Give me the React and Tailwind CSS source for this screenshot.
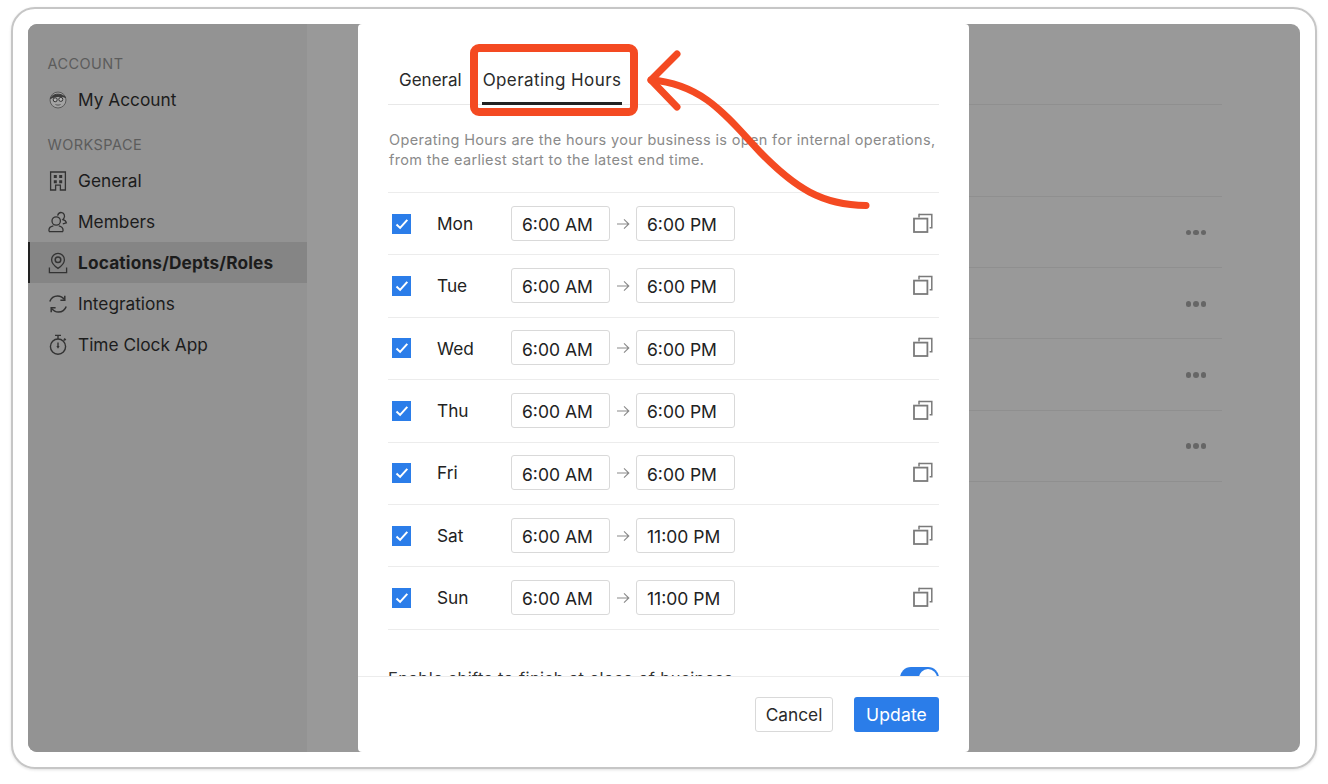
const days = [
  { day: "Mon", end: "6:00 PM" },
  { day: "Tue", end: "6:00 PM" },
  { day: "Wed", end: "6:00 PM" },
  { day: "Thu", end: "6:00 PM" },
  { day: "Fri", end: "6:00 PM" },
  { day: "Sat", end: "11:00 PM" },
  { day: "Sun", end: "11:00 PM" },
]

const AvatarIcon = () => (
  <svg width="20" height="20" viewBox="0 0 20 20" fill="none" stroke="#333" strokeWidth="1">
    <circle cx="10" cy="10" r="8" fill="#a3a3a3" stroke="#5a5a5a" />
    <path d="M2.400 8.600C4 4 12 2 17.600 7.400C13 5.800 7 6 2.400 8.600z" fill="#3a3a3a" stroke="#3a3a3a" />
    <circle cx="7.200" cy="9.800" r="2" fill="#b5b5b5" />
    <circle cx="12.800" cy="9.400" r="2" fill="#b5b5b5" />
    <path d="M7.500 14.500c1.600.8 3.400.8 5 0" stroke="#555" />
  </svg>
)

const BuildingIcon = () => (
  <svg width="20" height="20" viewBox="0 0 20 20" fill="none" stroke="#333" strokeWidth="1.300">
    <path d="M2.600 1h14.800v18h-5v-4.800H7.600V19h-5z" />
    <path d="M5.800 4h3v3h-3zM11.200 4h3v3h-3zM5.800 9.200h3v3h-3zM11.200 9.200h3v3h-3z" fill="#333" stroke="none" />
  </svg>
)

const MembersIcon = () => (
  <svg width="20" height="22" viewBox="0 0 20 22" fill="none" stroke="#333" strokeWidth="1.300">
    <circle cx="8.200" cy="10" r="4.200" />
    <path d="M1 20.600v-1.800c0-2.400 2.200-3.600 4.400-4M15 20.600v-1.800c0-2.400-2.200-3.600-4.200-4M1 20.600h14" />
    <path d="M9.600 4.600C10.200 2.400 12 1.200 13.800 1.600c2.400.5 3.400 3.400 2.200 5.400-.4.8-.8 1.200-1.200 1.600 1.600.4 3.200 1.400 3.600 3.200l-3.600 1" />
  </svg>
)

const LocationIcon = () => (
  <svg width="20" height="22" viewBox="0 0 20 22" fill="none" stroke="#333" strokeWidth="1.300">
    <path d="M10 16.400C6.600 14.200 3.600 11.600 3.600 7.800a6.400 6.400 0 0 1 12.800 0c0 3.800-3 6.400-6.400 8.600z" />
    <circle cx="10" cy="7.800" r="2.800" strokeWidth="1.500" />
    <path d="M1.400 15.600v5h17.200v-5" />
  </svg>
)

const SyncIcon = () => (
  <svg width="20" height="20" viewBox="0 0 20 20" fill="none" stroke="#333" strokeWidth="1.500">
    <path d="M1.800 7.600C3 4.200 6 2 9.600 2c2.800 0 5 1.200 6.600 3.400" />
    <path d="M16.800 1.800v4.400h-4.400" />
    <path d="M18.200 12.400c-1.200 3.400-4.200 5.600-7.800 5.600-2.800 0-5-1.200-6.600-3.400" />
    <path d="M3.200 18.200v-4.400h4.400" />
  </svg>
)

const TimerIcon = () => (
  <svg width="20" height="22" viewBox="0 0 20 22" fill="none" stroke="#333" strokeWidth="1.400">
    <circle cx="10" cy="12.600" r="7.600" />
    <path d="M7 1.400h6M10 1.400V5M16.200 4.400l1.600 1.600M15.600 6.600l1.400-1.400" />
    <path d="M10 8.600v4.600" />
    <path d="M8.400 12h3.200L10 14.800z" fill="#333" stroke="none" />
  </svg>
)

const CopyIcon = () => (
  <svg width="20" height="20" viewBox="0 0 20 20" fill="none" stroke="#7a7a7a">
    <rect x="1" y="5.600" width="13.400" height="13.400" strokeWidth="1.800" />
    <path d="M6 1.400h12.800v13.400h-2.200" strokeWidth="1.500" />
    <path d="M6 .800v3.600" strokeWidth="1.500" />
  </svg>
)

function SideItem({ icon, label, active }) {
  return (
    <div
      className={`flex h-[41px] items-center text-[17.300px] text-[#1c1c1c] ${
        active ? "border-l-2 border-[#222] bg-[#858585] pl-[18px] font-bold tracking-[0.15px]" : "pl-[20px]"
      }`}
    >
      <span className="flex w-[20px] justify-center">{icon}</span>
      <span className="ml-[10px] pt-[1px]">{label}</span>
    </div>
  )
}

function SectionLabel({ children }) {
  return <div className="h-5 pl-[19.500px] text-[14.500px] leading-5 tracking-[0.45px] text-[#5c5c5c]">{children}</div>
}

function ListRow({ height, dots }) {
  return (
    <div className={`flex items-center justify-end border-b border-[#8f8f8f] pr-[16px] ${height}`}>
      {dots && (
        <div className="flex gap-[2px] pt-px">
          <span className="h-[5.500px] w-[5.500px] rounded-full bg-[#666]"></span>
          <span className="h-[5.500px] w-[5.500px] rounded-full bg-[#666]"></span>
          <span className="h-[5.500px] w-[5.500px] rounded-full bg-[#666]"></span>
        </div>
      )}
    </div>
  )
}

function TimeBox({ value }) {
  return (
    <div className="-mt-px flex h-[35px] w-[99px] items-center rounded-[3px] border border-[#d9d9d9] pt-[4px] pl-[10px] text-[17.500px] text-[#222]">
      {value}
    </div>
  )
}

function DayRow({ day, end }) {
  return (
    <div className="flex h-[62.400px] items-center border-b border-[#ececec]">
      <div className="ml-[4px] flex h-[20px] w-[19px] items-center justify-center bg-[#2b7de9]">
        <svg width="14" height="12" viewBox="0 0 14 12" fill="none" stroke="#fff" strokeWidth="2">
          <path d="M1.500 6.500l3.600 3.400 7.200-8" />
        </svg>
      </div>
      <div className="ml-[26px] w-[74px] text-[17.300px] text-[#222]">{day}</div>
      <TimeBox value="6:00 AM" />
      <div className="flex w-[26px] justify-center">
        <svg width="14" height="12" viewBox="0 0 14 12" fill="none" stroke="#8a8a8a" strokeWidth="1.100">
          <path d="M1 6h12M8 1.400L12.800 6 8 10.600" />
        </svg>
      </div>
      <TimeBox value={end} />
      <div className="mr-[6px] ml-auto -translate-y-px">
        <CopyIcon />
      </div>
    </div>
  )
}

export default function App() {
  return (
    <div className="relative h-[784px] w-[1328px] overflow-hidden bg-white pt-[7px] pl-[11px] font-['Inter',sans-serif]">
      <div className="h-[762px] w-[1306px] rounded-[24px] border-2 border-[#c6c6c6] bg-white p-[15px] shadow-[0_1px_3px_rgba(0,0,0,0.12)]">
        <div className="relative flex h-[728px] w-[1272px] overflow-hidden rounded-[9px] bg-[#999999]">
          <aside className="w-[279px] shrink-0 bg-[#939393] pt-[30px]">
            <SectionLabel>ACCOUNT</SectionLabel>
            <div className="mt-[5px]">
              <SideItem icon={<AvatarIcon />} label="My Account" />
            </div>
            <div className="mt-[15px]">
              <SectionLabel>WORKSPACE</SectionLabel>
            </div>
            <div className="mt-[5px]">
              <SideItem icon={<BuildingIcon />} label="General" />
              <SideItem icon={<MembersIcon />} label="Members" />
              <SideItem icon={<LocationIcon />} label="Locations/Depts/Roles" active />
              <SideItem icon={<SyncIcon />} label="Integrations" />
              <SideItem icon={<TimerIcon />} label="Time Clock App" />
            </div>
          </aside>

          <main className="ml-[51px] w-[864px]">
            <ListRow height="h-[81px]" />
            <ListRow height="h-[92px]" />
            <ListRow height="h-[71.200px]" dots />
            <ListRow height="h-[71.200px]" dots />
            <ListRow height="h-[71.200px]" dots />
            <ListRow height="h-[71.200px]" dots />
          </main>

          <div className="absolute top-0 bottom-0 left-[330px] flex w-[611px] flex-col rounded-[4px] bg-white">
            <div className="h-[652px] overflow-hidden px-[30px]">
              <div className="flex h-[81px] items-end gap-[20px] border-b border-[#e8e8e8] pl-[11px] text-[17px] text-[#2a2a2a]">
                <div className="pb-[12px] leading-6">General</div>
                <div className="-mb-px border-b-[3px] border-[#222] px-px pb-[10px] leading-6 tracking-[0.42px]">Operating Hours</div>
              </div>
              <p className="mt-[25px] pl-px text-[14.500px] leading-5 tracking-[0.34px] text-[#8a8a8a]">
                Operating Hours are the hours your business is open for internal operations,
                <br />
                from the earliest start to the latest end time.
              </p>
              <div className="mt-[22px] border-t border-[#ececec]">
                {days.map((d) => (
                  <DayRow key={d.day} day={d.day} end={d.end} />
                ))}
              </div>
              <div className="mt-[37px] flex items-start justify-between">
                <span className="-mt-[1px] text-[16.500px] leading-6 tracking-[0.43px] text-[#333]">Enable shifts to finish at close of business</span>
                <div className="flex h-[22px] w-[39px] items-center justify-end rounded-full bg-[#2b7de9] pr-[2px]">
                  <span className="h-[18px] w-[18px] rounded-full bg-white"></span>
                </div>
              </div>
            </div>
            <div className="flex h-[76px] justify-end gap-[21px] border-t border-[#ececec] px-[30px] pt-[20px]">
              <button className="h-[35px] w-[78px] rounded-[3px] border border-[#d9d9d9] bg-white pt-px text-[17.300px] text-[#2a2a2a]">
                Cancel
              </button>
              <button className="h-[35px] w-[85px] rounded-[3px] bg-[#2b7de9] pt-px text-[17.500px] tracking-[0.15px] text-white">
                Update
              </button>
            </div>
          </div>
        </div>
      </div>

      <div className="absolute top-[44px] left-[470px] h-[72px] w-[168px] rounded-[9px] border-[8px] border-[#f44a22]"></div>
      <svg className="pointer-events-none absolute top-0 left-0" width="1328" height="784" fill="none" stroke="#f44a22" strokeWidth="7" strokeLinecap="round" strokeLinejoin="round">
        <path d="M866 205.500C822 205 795 188 760 152C728 118 704 84 651 80" />
        <path d="M677 54L651 80L677 107" />
      </svg>
    </div>
  )
}
